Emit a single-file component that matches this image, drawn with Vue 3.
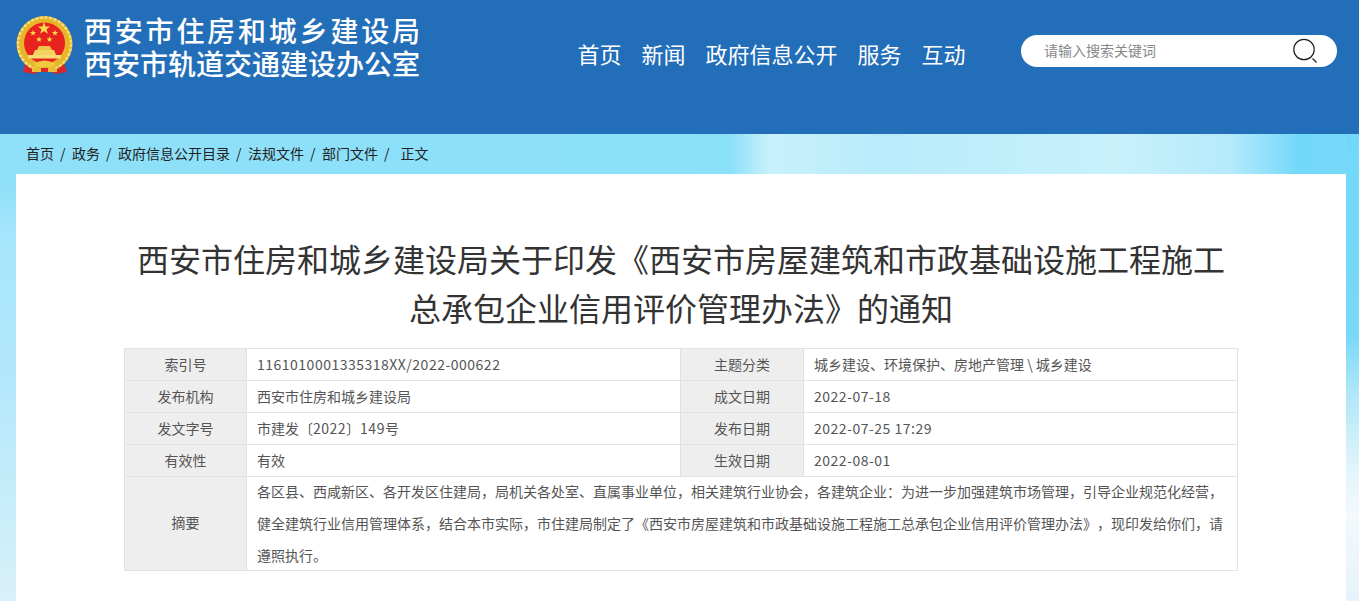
<script setup>
const navItems = ['首页', '新闻', '政府信息公开', '服务', '互动']

const crumbs = ['政务', '政府信息公开目录', '法规文件', '部门文件']

const rows = [
  { a: '索引号', b: '1161010001335318XX/2022-000622', c: '主题分类', d: '城乡建设、环境保护、房地产管理 \\ 城乡建设' },
  { a: '发布机构', b: '西安市住房和城乡建设局', c: '成文日期', d: '2022-07-18' },
  { a: '发文字号', b: '市建发〔2022〕149号', c: '发布日期', d: '2022-07-25 17:29' },
  { a: '有效性', b: '有效', c: '生效日期', d: '2022-08-01' },
]

const summary =
  '各区县、西咸新区、各开发区住建局，局机关各处室、直属事业单位，相关建筑行业协会，各建筑企业：为进一步加强建筑市场管理，引导企业规范化经营，健全建筑行业信用管理体系，结合本市实际，市住建局制定了《西安市房屋建筑和市政基础设施工程施工总承包企业信用评价管理办法》，现印发给你们，请遵照执行。'

const stars = [
  { x: 18, y: 19, r: 3.2 },
  { x: 24, y: 25.5, r: 3.2 },
  { x: 34.5, y: 25.5, r: 3.2 },
  { x: 40, y: 19, r: 3.2 },
  { x: 29, y: 14.5, r: 6.5 },
]

function starPoints(s) {
  const pts = []
  for (let i = 0; i < 10; i++) {
    const rad = i % 2 ? s.r * 0.4 : s.r
    const ang = -Math.PI / 2 + (i * Math.PI) / 5
    pts.push((s.x + rad * Math.cos(ang)).toFixed(2) + ',' + (s.y + rad * Math.sin(ang)).toFixed(2))
  }
  return pts.join(' ')
}

// digits in the reference run a little wider than the CJK font's own
function parts(text) {
  return text.split(/([0-9A-Z/:-][0-9A-Z/: -]*)/).filter(Boolean)
}

function isNum(part) {
  return /^[0-9A-Z/:-]/.test(part)
}
</script>

<template>
  <div class="page">
    <header class="top">
      <div class="brand">
        <svg class="emblem" viewBox="0 0 60 62" width="60" height="62">
          <path d="M12 44 L8 58 L20 60 L26 55 L33 55 L40 60 L52 58 L47 44 Z" fill="#d8262c" />
          <circle cx="29.5" cy="30" r="28" fill="#e6b52b" />
          <circle cx="29.5" cy="30" r="26.5" fill="none" stroke="#f7df7c" stroke-width="2.4" stroke-dasharray="3 1.6" />
          <circle cx="29.5" cy="29" r="20.5" fill="#e8231f" />
          <polygon v-for="(s, i) in stars" :key="i" :points="starPoints(s)" fill="#f9dc4e" />
          <path d="M20 36 H39 L41 41 H18 Z" fill="#f4d362" />
          <path d="M24 32 H35 L37 36 H22 Z" fill="#eec548" />
          <path d="M13 41 H46 V44.5 H13 Z" fill="#f6dc73" />
          <path d="M18 50 Q29.5 43 41 50 L37 53 H22 Z" fill="#f0c93f" />
          <path d="M17 54 H42 V58 H17 Z" fill="#eabd35" />
          <path d="M26 54 H33 V58 H26 Z" fill="#d8262c" />
        </svg>
        <div class="brand-text">
          <div class="brand-line spaced">西安市住房和城乡建设局</div>
          <div class="brand-line second">西安市轨道交通建设办公室</div>
        </div>
      </div>
      <nav class="nav">
        <a v-for="n in navItems" :key="n">{{ n }}</a>
      </nav>
      <div class="search">
        <span class="placeholder">请输入搜索关键词</span>
        <svg class="search-icon" viewBox="0 0 26 26" width="26" height="26">
          <circle cx="11" cy="11.5" r="10.2" fill="none" stroke="#222" stroke-width="1.2" />
          <path d="M19.5 20.5 L23.5 24.5" stroke="#222" stroke-width="1.3" fill="none" />
        </svg>
      </div>
    </header>

    <main class="body">
      <div class="crumbs">
        <span class="crumb">首页</span>
        <template v-for="c in crumbs" :key="c">
          <span class="sep">/</span>
          <span class="crumb">{{ c }}</span>
        </template>
        <span class="sep">/</span>
        <span class="crumb last">正文</span>
      </div>

      <section class="card">
        <h1 class="title">西安市住房和城乡建设局关于印发《西安市房屋建筑和市政基础设施工程施工<br />总承包企业信用评价管理办法》的通知</h1>

        <table class="info">
          <colgroup>
            <col class="c1" />
            <col class="c2" />
            <col class="c3" />
            <col class="c4" />
          </colgroup>
          <tbody>
            <tr v-for="r in rows" :key="r.a">
              <th>{{ r.a }}</th>
              <td><span v-for="(p, i) in parts(r.b)" :key="i" :class="{ num: isNum(p) }">{{ p }}</span></td>
              <th>{{ r.c }}</th>
              <td><span v-for="(p, i) in parts(r.d)" :key="i" :class="{ num: isNum(p) }">{{ p }}</span></td>
            </tr>
            <tr>
              <th class="summary-head">摘要</th>
              <td colspan="3" class="summary">
                <div class="summary-text">{{ summary }}</div>
              </td>
            </tr>
          </tbody>
        </table>
      </section>
    </main>
  </div>
</template>

<style>
html,
body {
  margin: 0;
  overflow: hidden;
}
</style>

<style scoped>
.page {
  width: 1359px;
  height: 601px;
  overflow: hidden;
  font-family: "Noto Sans CJK SC", "Noto Sans", sans-serif;
  display: flex;
  flex-direction: column;
}
.top {
  height: 134px;
  flex: none;
  background: #226eb9;
  display: flex;
  align-items: flex-start;
  box-sizing: border-box;
}
.brand {
  display: flex;
  width: 577.5px;
  padding: 14px 0 0 15px;
  box-sizing: border-box;
}
.emblem {
  flex: none;
}
.brand-text {
  margin-left: 9px;
  color: #fff;
}
.brand-line {
  font-size: 28px;
  font-weight: 500;
  line-height: 32px;
  white-space: nowrap;
}
.brand-line.spaced {
  letter-spacing: 2.8px;
}
.brand-line.second {
  margin-top: 1px;
}
.nav {
  display: flex;
  gap: 20px;
  margin-top: 36px;
  width: 443.5px;
}
.nav a {
  color: #fff;
  font-size: 22px;
  line-height: 34px;
}
.search {
  width: 316px;
  height: 32px;
  margin-top: 35px;
  background: #fff;
  border-radius: 16px;
  display: flex;
  align-items: center;
  justify-content: space-between;
  padding: 0 18px 0 23px;
  box-sizing: border-box;
}
.placeholder {
  font-size: 14px;
  line-height: 30px;
  margin-top: -2px;
  color: #888;
}
.body {
  flex: 1;
  padding: 0 13px 0 16px;
  background:
    linear-gradient(180deg, #8fe0f9 0, #8fe0f9 50px, #a6e5fb 100px, #b4e8fb 250px, #c4ecfa 350px, #d9f1fa 467px) left top / 16px 100% no-repeat,
    linear-gradient(180deg, #72d8fa 0, #78d8f9 200px, #b0e7f8 260px, #e4f5fb 340px, #f3f9fd 380px, #e6f3fa 467px) right top / 13px 100% no-repeat,
    linear-gradient(90deg, #8fe0f9 0, #8be0f9 730px, #c8f1fb 770px, #b8ecfb 880px, #c8f1fb 1120px, #b5eafb 1230px, #72d8fa 1300px, #78dafa 1359px);
}
.crumbs {
  height: 38px;
  margin-bottom: 2px;
  display: flex;
  align-items: center;
  padding-left: 10px;
  font-size: 14px;
  color: #222;
}
.sep {
  margin: 0 6.5px 0 6px;
}
.crumb.last {
  margin-left: 4.5px;
}
.card {
  background: #fff;
  height: 427px;
  padding-top: 60px;
  box-sizing: border-box;
}
.title {
  margin: 0 0 16px;
  font-size: 32px;
  font-weight: 400;
  line-height: 49px;
  color: #333;
  text-align: center;
  text-spacing-trim: space-all;
}
.info {
  width: 1114px;
  margin: 0 auto;
  border-collapse: collapse;
  table-layout: fixed;
  font-size: 14px;
  color: #555;
}
.c1 {
  width: 122px;
}
.c2 {
  width: 434px;
}
.c3 {
  width: 123px;
}
.info th,
.info td {
  border: 1px solid #e2e2e2;
  height: 32px;
  padding: 0 10px 1px;
  font-weight: 400;
  line-height: 30px;
  box-sizing: border-box;
}
.info th {
  background: #eee;
  text-align: center;
}
.info td {
  text-align: left;
  white-space: nowrap;
  text-spacing-trim: space-all;
}
.num {
  letter-spacing: 0.5px;
}
.info td.summary {
  white-space: normal;
  word-break: break-all;
  height: auto;
  padding-bottom: 0;
}
.summary-text {
  height: 95px;
  margin: -2px 0 0;
  line-height: 32px;
}
.info th.summary-head {
  height: auto;
  padding-bottom: 3px;
}
</style>
